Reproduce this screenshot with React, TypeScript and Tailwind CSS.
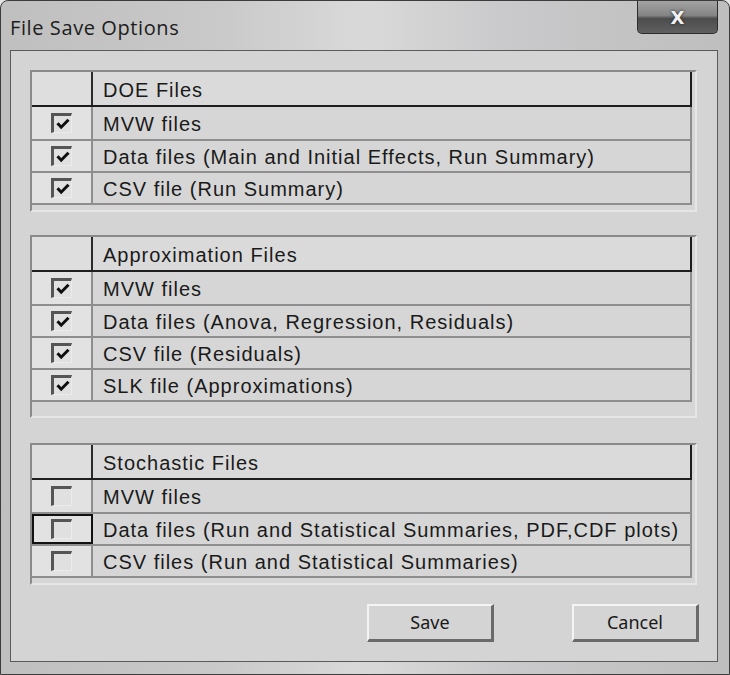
import React, { useState } from "react";

// File Save Options dialog (classic Windows look)

type Group = {
  id: string;
  title: string;
  items: string[];
  checked: boolean;
  bottom: string;
};

const groups: Group[] = [
  {
    id: "doe",
    title: "DOE Files",
    checked: true,
    bottom: "h-[5px]",
    items: ["MVW files", "Data files (Main and Initial Effects, Run Summary)", "CSV file (Run Summary)"],
  },
  {
    id: "approx",
    title: "Approximation Files",
    checked: true,
    bottom: "h-[14px]",
    items: ["MVW files", "Data files (Anova, Regression, Residuals)", "CSV file (Residuals)", "SLK file (Approximations)"],
  },
  {
    id: "stoch",
    title: "Stochastic Files",
    checked: false,
    bottom: "h-[5px]",
    items: ["MVW files", "Data files (Run and Statistical Summaries, PDF,CDF plots)", "CSV files (Run and Statistical Summaries)"],
  },
];

function CheckBox({ checked }: { checked: boolean }) {
  return (
    <div className="w-[21px] h-[20px] border-t-[3px] border-l-[3px] border-t-[#555] border-l-[#555] border-r border-b border-r-[#ececec] border-b-[#ececec] bg-[#e0e0e0] flex items-center justify-center">
      {checked && (
        <svg width="14" height="12" viewBox="0 0 14 12">
          <path d="M1.5 5.2 L5.2 9.2 L12.5 1.8" fill="none" stroke="#0e0e0e" strokeWidth="3" />
        </svg>
      )}
    </div>
  );
}

function FileList({ group, focusRow }: { group: Group; focusRow?: number }) {
  const [checks, setChecks] = useState(group.items.map(() => group.checked));

  return (
    <div className="w-[667px] border-2 border-t-[#8a8a8a] border-l-[#8a8a8a] border-b-[#e6e6e6] border-r-[#e6e6e6] bg-[#d6d6d6]">
      {/* header */}
      <div className="flex w-[660px] h-[35px] bg-[#dadada] border-b-2 border-b-[#1e1e1e]">
        <div className="w-[61px] border-r-2 border-r-[#2a2a2a] bg-[#dedede]" />
        <div className="flex-1 flex items-center pl-[10px] pt-[2px] border-r-2 border-r-[#1e1e1e] text-[20px] tracking-[1px] text-[#1a1a1a]">
          {group.title}
        </div>
      </div>
      {group.items.map((item, i) => (
        <div
          key={item}
          className={`flex w-[660px] border-b-2 border-b-[#8e8e8e] ${i === 0 ? "h-[34px]" : "h-[32px]"}`}
        >
          <button
            onClick={() => setChecks(checks.map((c, j) => (j === i ? !c : c)))}
            className={`w-[61px] flex items-center justify-center bg-[#e2e2e2] border-r-2 border-r-[#8e8e8e] ${
              focusRow === i ? "outline-2 outline-[#111] -outline-offset-2" : ""
            }`}
          >
            <CheckBox checked={checks[i]} />
          </button>
          <div className="flex-1 flex items-center pl-[10px] pt-[1px] border-r-2 border-r-[#8e8e8e] text-[20px] tracking-[1px] text-[#1a1a1a] whitespace-nowrap">
            {item}
          </div>
        </div>
      ))}
      <div className={group.bottom} />
    </div>
  );
}

function DlgButton({ label }: { label: string }) {
  return (
    <button className="w-[127px] h-[38px] bg-[#d4d4d4] border-t-2 border-l-2 border-t-[#f4f4f4] border-l-[#f4f4f4] border-b-[3px] border-r-[3px] border-b-[#6a6a6a] border-r-[#6a6a6a] text-[18px] text-[#1a1a1a] font-['Noto_Sans',sans-serif]">
      {label}
    </button>
  );
}

export default function App() {
  return (
    <div className="w-[730px] h-[675px] bg-[#e6e6e6] font-['Liberation_Sans',Arial,sans-serif]">
      <div className="w-[730px] h-[675px] rounded-t-[8px] border border-[#3c3c3c] flex flex-col bg-[linear-gradient(90deg,#bfbfbf_0%,#c9c9c9_30%,#d9d9d9_50%,#c9c9cb_70%,#bebebe_100%)]">
        {/* title bar */}
        <div className="h-[49px] flex items-start justify-between pl-[9px] pr-[11px]">
          <div className="pt-[12px] text-[20px] text-[#1c1c1c] font-['Open_Sans',sans-serif] tracking-[0.6px]">
            File Save Options
          </div>
          <div className="w-[81px] h-[33px] rounded-b-[5px] border border-[#2c2c2c] border-t-0 bg-[linear-gradient(180deg,#a4a4a4_0%,#848484_45%,#4c4c4c_55%,#606060_100%)] flex items-center justify-center">
            <span className="text-[#f2f2f2] font-bold text-[18px] font-['DejaVu_Sans',sans-serif] [text-shadow:0_0_3px_#222]">X</span>
          </div>
        </div>
        {/* client area */}
        <div className="flex-1 ml-[9px] mr-[11px] mb-[12px] border border-[#5a5a5a] bg-[#d4d4d4] pt-[19px] pl-[19px] flex flex-col">
          <FileList group={groups[0]} />
          <div className="h-[23px]" />
          <FileList group={groups[1]} />
          <div className="h-[25px]" />
          <FileList group={groups[2]} focusRow={1} />
          <div className="flex gap-[78px] pl-[337px] pt-[19px]">
            <DlgButton label="Save" />
            <DlgButton label="Cancel" />
          </div>
        </div>
      </div>
    </div>
  );
}
